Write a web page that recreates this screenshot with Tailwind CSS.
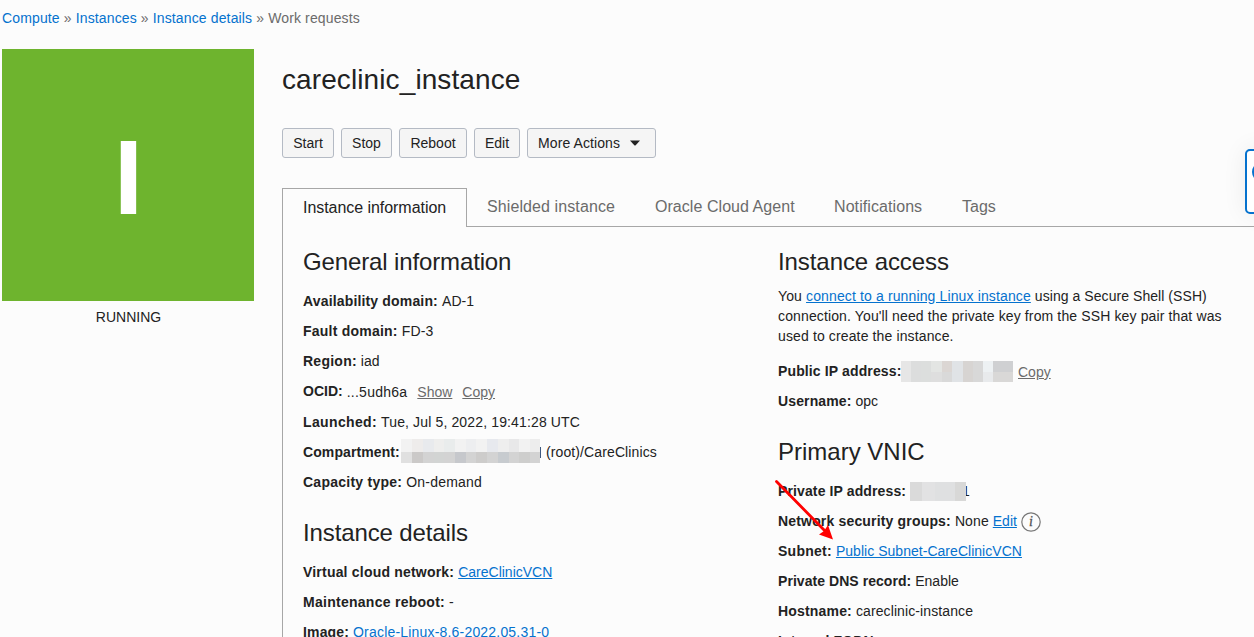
<!DOCTYPE html>
<html lang="en">
<head>
<meta charset="utf-8">
<title>careclinic_instance</title>
<script src="https://cdn.jsdelivr.net/npm/@tailwindcss/browser@4"></script>
</head>
<body class="relative h-[637px] w-[1254px] overflow-hidden bg-[#fcfcfc] font-['Liberation_Sans',Arial,sans-serif] text-[14px] leading-5 text-[#222]">
<nav class="flex h-[49px] items-start gap-1 pt-2 pl-[2px] tracking-[.135px] whitespace-nowrap text-[#6b6b6b]">
  <a class="text-[#0572ce]">Compute</a><span>»</span><a class="text-[#0572ce]">Instances</a><span>»</span><a class="text-[#0572ce]">Instance details</a><span>»</span><span>Work requests</span>
</nav>
<div class="flex pl-[2px]">
  <aside class="w-[252px] shrink-0 text-center">
    <div class="flex h-[252px] items-center justify-center bg-[#6eb42e] pt-1 pl-[1px] text-[106px] leading-none font-bold text-white">I</div>
    <div class="pt-1.5 pl-px">RUNNING</div>
  </aside>
  <main class="ml-7 w-[972px] shrink-0">
    <h1 class="h-[79px] pt-[13px] text-[28px] leading-9 tracking-[.1px]">careclinic_instance</h1>
    <div class="flex h-[60px] gap-[7px] text-center whitespace-nowrap">
      <button class="h-[30px] w-[52px] rounded-[3px] border border-[#b4bac4] bg-[#f5f5f5]">Start</button>
      <button class="h-[30px] w-[51px] rounded-[3px] border border-[#b4bac4] bg-[#f5f5f5]">Stop</button>
      <button class="h-[30px] w-[68px] rounded-[3px] border border-[#b4bac4] bg-[#f5f5f5]">Reboot</button>
      <button class="h-[30px] w-[46px] rounded-[3px] border border-[#b4bac4] bg-[#f5f5f5]">Edit</button>
      <button class="flex h-[30px] w-[129px] items-center rounded-[3px] border border-[#b4bac4] bg-[#f5f5f5] pl-2.5 tracking-[.09px]">More Actions<svg class="ml-2.5" width="10" height="6" viewBox="0 0 10 6"><path d="M0 .5h10L5.700 5.200q-.7.6-1.400 0z" fill="#222"/></svg></button>
    </div>
    <div class="flex h-[39px] text-[16px] leading-5 whitespace-nowrap text-[#6b6b6b]">
      <div class="w-[185px] border border-b-0 border-[#a7a7a7] pt-[9px] pl-5 tracking-[-.05px] text-[#222]">Instance information</div>
      <div class="flex flex-1 border-b border-[#a7a7a7] pt-[9px] pl-5">
        <span class="w-[168px] tracking-[.1px]">Shielded instance</span><span class="w-[179px] tracking-[.05px]">Oracle Cloud Agent</span><span class="w-32 tracking-[.08px]">Notifications</span><span>Tags</span>
      </div>
    </div>
    <div class="flex h-[420px] border-l border-[#a7a7a7] pt-[19px] pl-5 whitespace-nowrap">
      <section class="w-[475px]">
        <h2 class="h-10 text-[24px] leading-8 tracking-[-.13px]">General information</h2>
        <div class="flex h-[30px] items-center gap-1"><b class="tracking-[.16px]">Availability domain:</b><span class="tracking-[.1px]">AD-1</span></div>
        <div class="flex h-[30px] items-center gap-1"><b class="tracking-[.23px]">Fault domain:</b><span class="tracking-[.1px]">FD-3</span></div>
        <div class="flex h-[30px] items-center gap-1"><b class="tracking-[.25px]">Region:</b><span>iad</span></div>
        <div class="flex h-[31px] items-start gap-1 pt-[5px]"><b>OCID:</b><span class="pt-px tracking-[.25px]">...5udh6a</span><a class="ml-1.5 pt-px text-[#6b6b6b] underline">Show</a><a class="ml-1.5 pt-px text-[#6b6b6b] underline">Copy</a></div>
        <div class="flex h-[30px] items-center gap-1"><b class="tracking-[.36px]">Launched:</b><span class="tracking-[.14px]">Tue, Jul 5, 2022, 19:41:28 UTC</span></div>
        <div class="flex h-[30px] items-center"><b class="w-[98px] tracking-[.1px]">Compartment:</b>
          <svg class="-mt-[3px] h-6 w-[139px] shrink-0" viewBox="0 0 139 24" shape-rendering="crispEdges">
            <rect width="139" height="13" fill="#f2f2f2"/><rect x="11" width="11" height="13" fill="#eeeceb"/><rect x="22" width="11" height="13" fill="#e8eaed"/><rect x="33" width="10" height="13" fill="#eeeeed"/><rect x="43" width="11" height="13" fill="#e9ecec"/><rect x="65" width="10" height="13" fill="#edeef0"/><rect x="86" width="11" height="13" fill="#e7e9ee"/><rect x="97" width="11" height="13" fill="#eeeeee"/><rect x="108" width="10" height="13" fill="#e8e8e9"/><rect x="129" width="10" height="13" fill="#ededed"/>
            <rect y="13" width="139" height="11" fill="#d3d3d3"/><rect y="13" width="11" height="11" fill="#e0e0e0"/><rect x="11" y="13" width="11" height="11" fill="#cbc9c8"/><rect x="33" y="13" width="10" height="11" fill="#d2d4d3"/><rect x="54" y="13" width="11" height="11" fill="#c6c8cc"/><rect x="75" y="13" width="11" height="11" fill="#cdcccb"/><rect x="97" y="13" width="11" height="11" fill="#c7cbcf"/><rect x="118" y="13" width="11" height="11" fill="#cececd"/>
          </svg><i class="h-[11px] w-px bg-[#3d587f]"></i><span class="ml-[5px] tracking-[.11px]">(root)/CareClinics</span></div>
        <div class="flex h-[30px] items-center gap-1"><b class="tracking-[.25px]">Capacity type:</b><span class="tracking-[.22px]">On-demand</span></div>
        <h2 class="h-[60px] pt-5 text-[24px] leading-8 tracking-[-.12px]">Instance details</h2>
        <div class="flex h-[30px] items-center gap-1"><b class="tracking-[.2px]">Virtual cloud network:</b><a class="text-[#0572ce] underline">CareClinicVCN</a></div>
        <div class="flex h-[30px] items-center gap-1"><b class="tracking-[.27px]">Maintenance reboot:</b><span>-</span></div>
        <div class="flex h-[30px] items-center gap-1"><b class="tracking-[.15px]">Image:</b><a class="tracking-[.19px] text-[#0572ce] underline">Oracle-Linux-8.6-2022.05.31-0</a></div>
      </section>
      <section class="w-[460px]">
        <h2 class="h-10 text-[24px] leading-8 tracking-[-.08px]">Instance access</h2>
        <p class="h-[70px] tracking-[.13px]">You <a class="text-[#0572ce] underline">connect to a running Linux instance</a><span class="tracking-[.06px]"> using a Secure Shell (SSH)</span><br>connection. You'll need the private key from the SSH key pair that was<br>used to create the instance.</p>
        <div class="flex h-[30px] items-center"><b class="w-[123px] tracking-[.13px]">Public IP address:</b>
          <svg class="h-[21px] w-28 shrink-0" viewBox="0 0 112 21" shape-rendering="crispEdges">
            <rect width="112" height="21" fill="#e6e6e6"/><rect x="10" width="10" height="21" fill="#dcdddd"/><rect x="20" width="10" height="21" fill="#dcdedd"/><rect x="30" width="11" height="11" fill="#e3e5e3"/><rect x="30" y="11" width="11" height="10" fill="#dedede"/><rect x="41" width="10" height="11" fill="#dbd6d3"/><rect x="41" y="11" width="10" height="10" fill="#d9d9d9"/><rect x="51" width="11" height="21" fill="#e0e3e6"/><rect x="62" width="10" height="21" fill="#d7d4d2"/><rect x="72" width="10" height="21" fill="#d8d8d8"/><rect x="82" width="10" height="11" fill="#edf1f3"/><rect x="82" y="11" width="10" height="10" fill="#e8eaec"/><rect x="92" width="20" height="11" fill="#cfd0d2"/><rect x="92" y="11" width="20" height="10" fill="#d9d8d7"/>
          </svg><a class="ml-[5px] pt-0.5 text-[#6b6b6b] underline">Copy</a></div>
        <div class="flex h-[30px] items-center gap-1"><b class="tracking-[.13px]">Username:</b><span>opc</span></div>
        <h2 class="h-[60px] pt-5 text-[24px] leading-8">Primary VNIC</h2>
        <div class="flex h-[30px] items-center"><b class="w-[132px] tracking-[.12px]">Private IP address:</b>
          <div class="flex h-[19px] w-14 shrink-0"><i class="w-3 bg-[#dadada]"></i><i class="w-[13px] bg-[#e2e2e3]"></i><i class="w-5 bg-[#dfe0e1]"></i><i class="w-[11px] bg-[#d8d8d7]"></i></div><span class="-ml-1 w-2 [clip-path:inset(0_0_0_4px)]">1</span></div>
        <div class="flex h-[30px] items-center gap-1"><b class="tracking-[.17px]">Network security groups:</b><span class="tracking-[.1px]">None</span><a class="text-[#0572ce] underline">Edit</a>
          <svg class="mt-0.5 size-5 shrink-0" viewBox="0 0 20 20"><circle cx="10" cy="10" r="9.200" fill="none" stroke="#777" stroke-width="1.200"/><text x="10" y="14" text-anchor="middle" font-family="Liberation Serif" font-style="italic" font-size="14" fill="#555" stroke="#555" stroke-width=".3">i</text></svg></div>
        <div class="flex h-[30px] items-center gap-1"><b class="tracking-[.26px]">Subnet:</b><a class="tracking-[.03px] text-[#0572ce] underline">Public Subnet-CareClinicVCN</a></div>
        <div class="flex h-[30px] items-center gap-1"><b class="tracking-[.05px]">Private DNS record:</b><span>Enable</span></div>
        <div class="flex h-[30px] items-center gap-1"><b class="tracking-[.18px]">Hostname:</b><span class="tracking-[.1px]">careclinic-instance</span></div>
        <div class="flex h-[30px] items-center gap-1"><b class="tracking-[.13px]">Internal FQDN:</b></div>
      </section>
    </div>
  </main>
</div>
<svg class="absolute top-[475px] left-[770px]" width="70" height="70" viewBox="0 0 70 70"><path d="M6.500 6.500 55 56" stroke="#f00" stroke-width="2.800" stroke-linecap="round"/><path d="m63 64.500-14-5 5-3.500 4-6z" fill="#f00"/></svg>
<div class="absolute top-[149px] left-[1245px] h-[65px] w-16 rounded-[5px] border-2 border-[#0572ce] bg-white shadow-[0_0_24px_rgba(0,0,0,.07)]">
  <div class="mt-[11px] ml-[5px] size-5 rounded-full border-2 border-[#0572ce] bg-[#4b9bdc]"></div>
</div>
</body>
</html>
